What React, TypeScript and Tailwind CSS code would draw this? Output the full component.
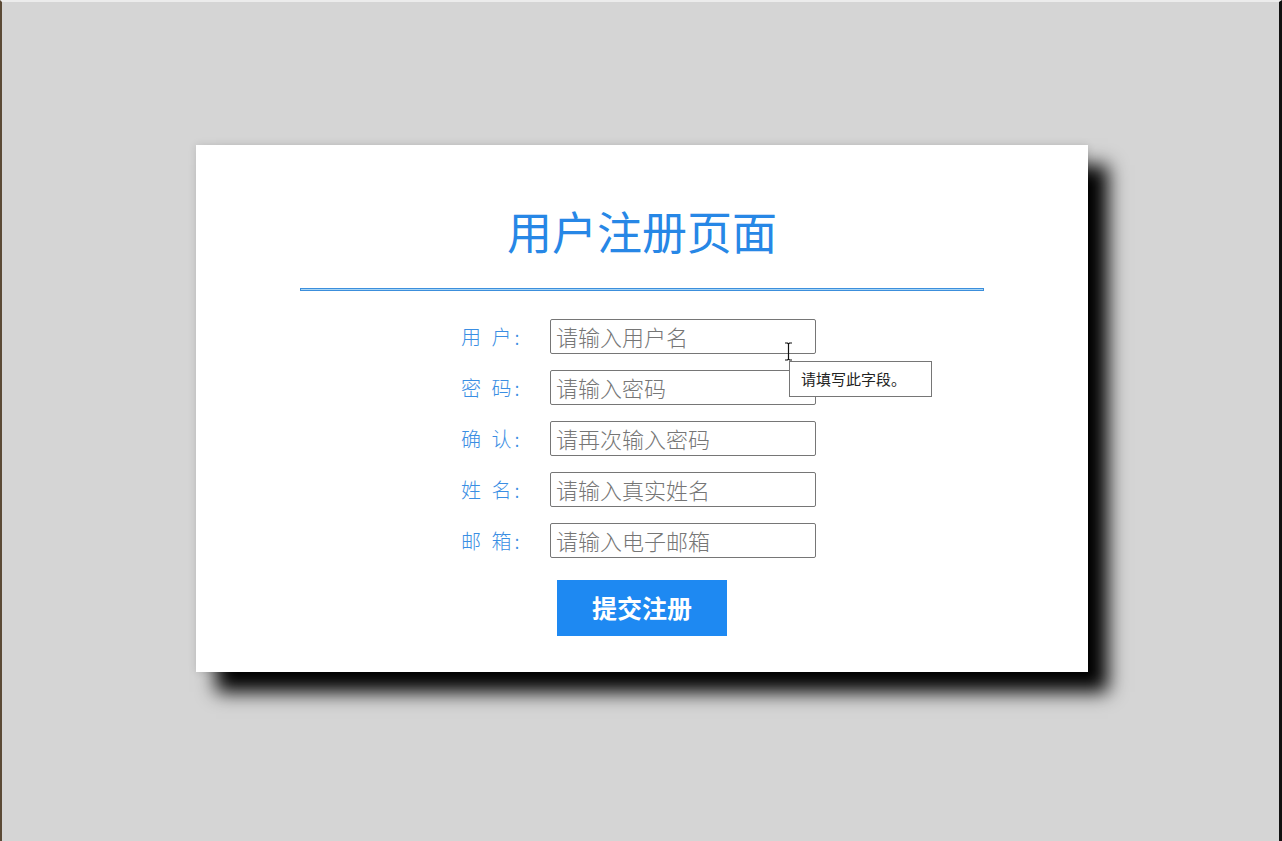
import { useState } from "react";

const fields = [
  { label: "用 户:", name: "username", placeholder: "请输入用户名", type: "text" },
  { label: "密 码:", name: "password", placeholder: "请输入密码", type: "password" },
  { label: "确 认:", name: "confirm", placeholder: "请再次输入密码", type: "password" },
  { label: "姓 名:", name: "realname", placeholder: "请输入真实姓名", type: "text" },
  { label: "邮 箱:", name: "email", placeholder: "请输入电子邮箱", type: "text" },
];

function CursorBeam() {
  return (
    <svg width="9" height="19" viewBox="0 0 9 19" className="absolute left-[588px] top-[197px]">
      <path d="M1 1h2.5L4.5 2l1-1H8M4.5 2v15M1 18h2.5l1-1 1 1H8" fill="none" stroke="#111" strokeWidth="1.2" />
    </svg>
  );
}

export default function App() {
  const [values, setValues] = useState<Record<string, string>>({});

  return (
    <div className="min-h-screen bg-[#d5d5d5] border-t-2 border-t-[#ececec] border-l-2 border-l-[#5b4a36] border-r-[3px] border-r-[#111] font-['Noto_Sans_CJK_SC',sans-serif]">
      <div className="pt-[143px]">
        <div className="relative ml-[194px] w-[892px] bg-white pt-[56px] pb-[36px] shadow-[20px_20px_18px_#000,0_0_8px_rgba(0,0,0,0.12)]">
          <h1 className="text-center text-[45px] leading-[60px] text-[#2787e6]">用户注册页面</h1>
          <div className="mx-[104px] mt-[27px] h-[3px] border border-[#3c8fdc] bg-[#a8d5f5]" />

          <form className="mt-[28px] flex flex-col gap-[16px]" onSubmit={(e) => e.preventDefault()}>
            {fields.map((field) => (
              <div key={field.name} className="flex items-center pl-[265px]">
                <label htmlFor={field.name} className="w-[89px] text-[20px] font-light tracking-[3px] text-[#3a8ee3]">
                  {field.label}
                </label>
                <input
                  id={field.name}
                  type={field.type === "password" ? "text" : field.type}
                  required
                  value={values[field.name] || ""}
                  onChange={(e) => setValues({ ...values, [field.name]: e.target.value })}
                  placeholder={field.placeholder}
                  className="h-[35px] w-[266px] rounded-[2px] border border-[#767676] px-[5px] pb-[2px] text-[22px] font-light text-[#333] placeholder:text-[#767676] outline-none"
                />
              </div>
            ))}

            <div className="mt-[6px] flex justify-center">
              <button type="submit" className="h-[56px] w-[170px] bg-[#1e89f2] text-[25px] font-bold text-white">
                提交注册
              </button>
            </div>
          </form>

          <CursorBeam />
          <div className="absolute left-[593px] top-[216px] flex h-[36px] w-[143px] items-center border border-[#767676] bg-white pl-[11px] text-[15px] text-[#222]">
            请填写此字段。
          </div>
        </div>
      </div>
    </div>
  );
}
